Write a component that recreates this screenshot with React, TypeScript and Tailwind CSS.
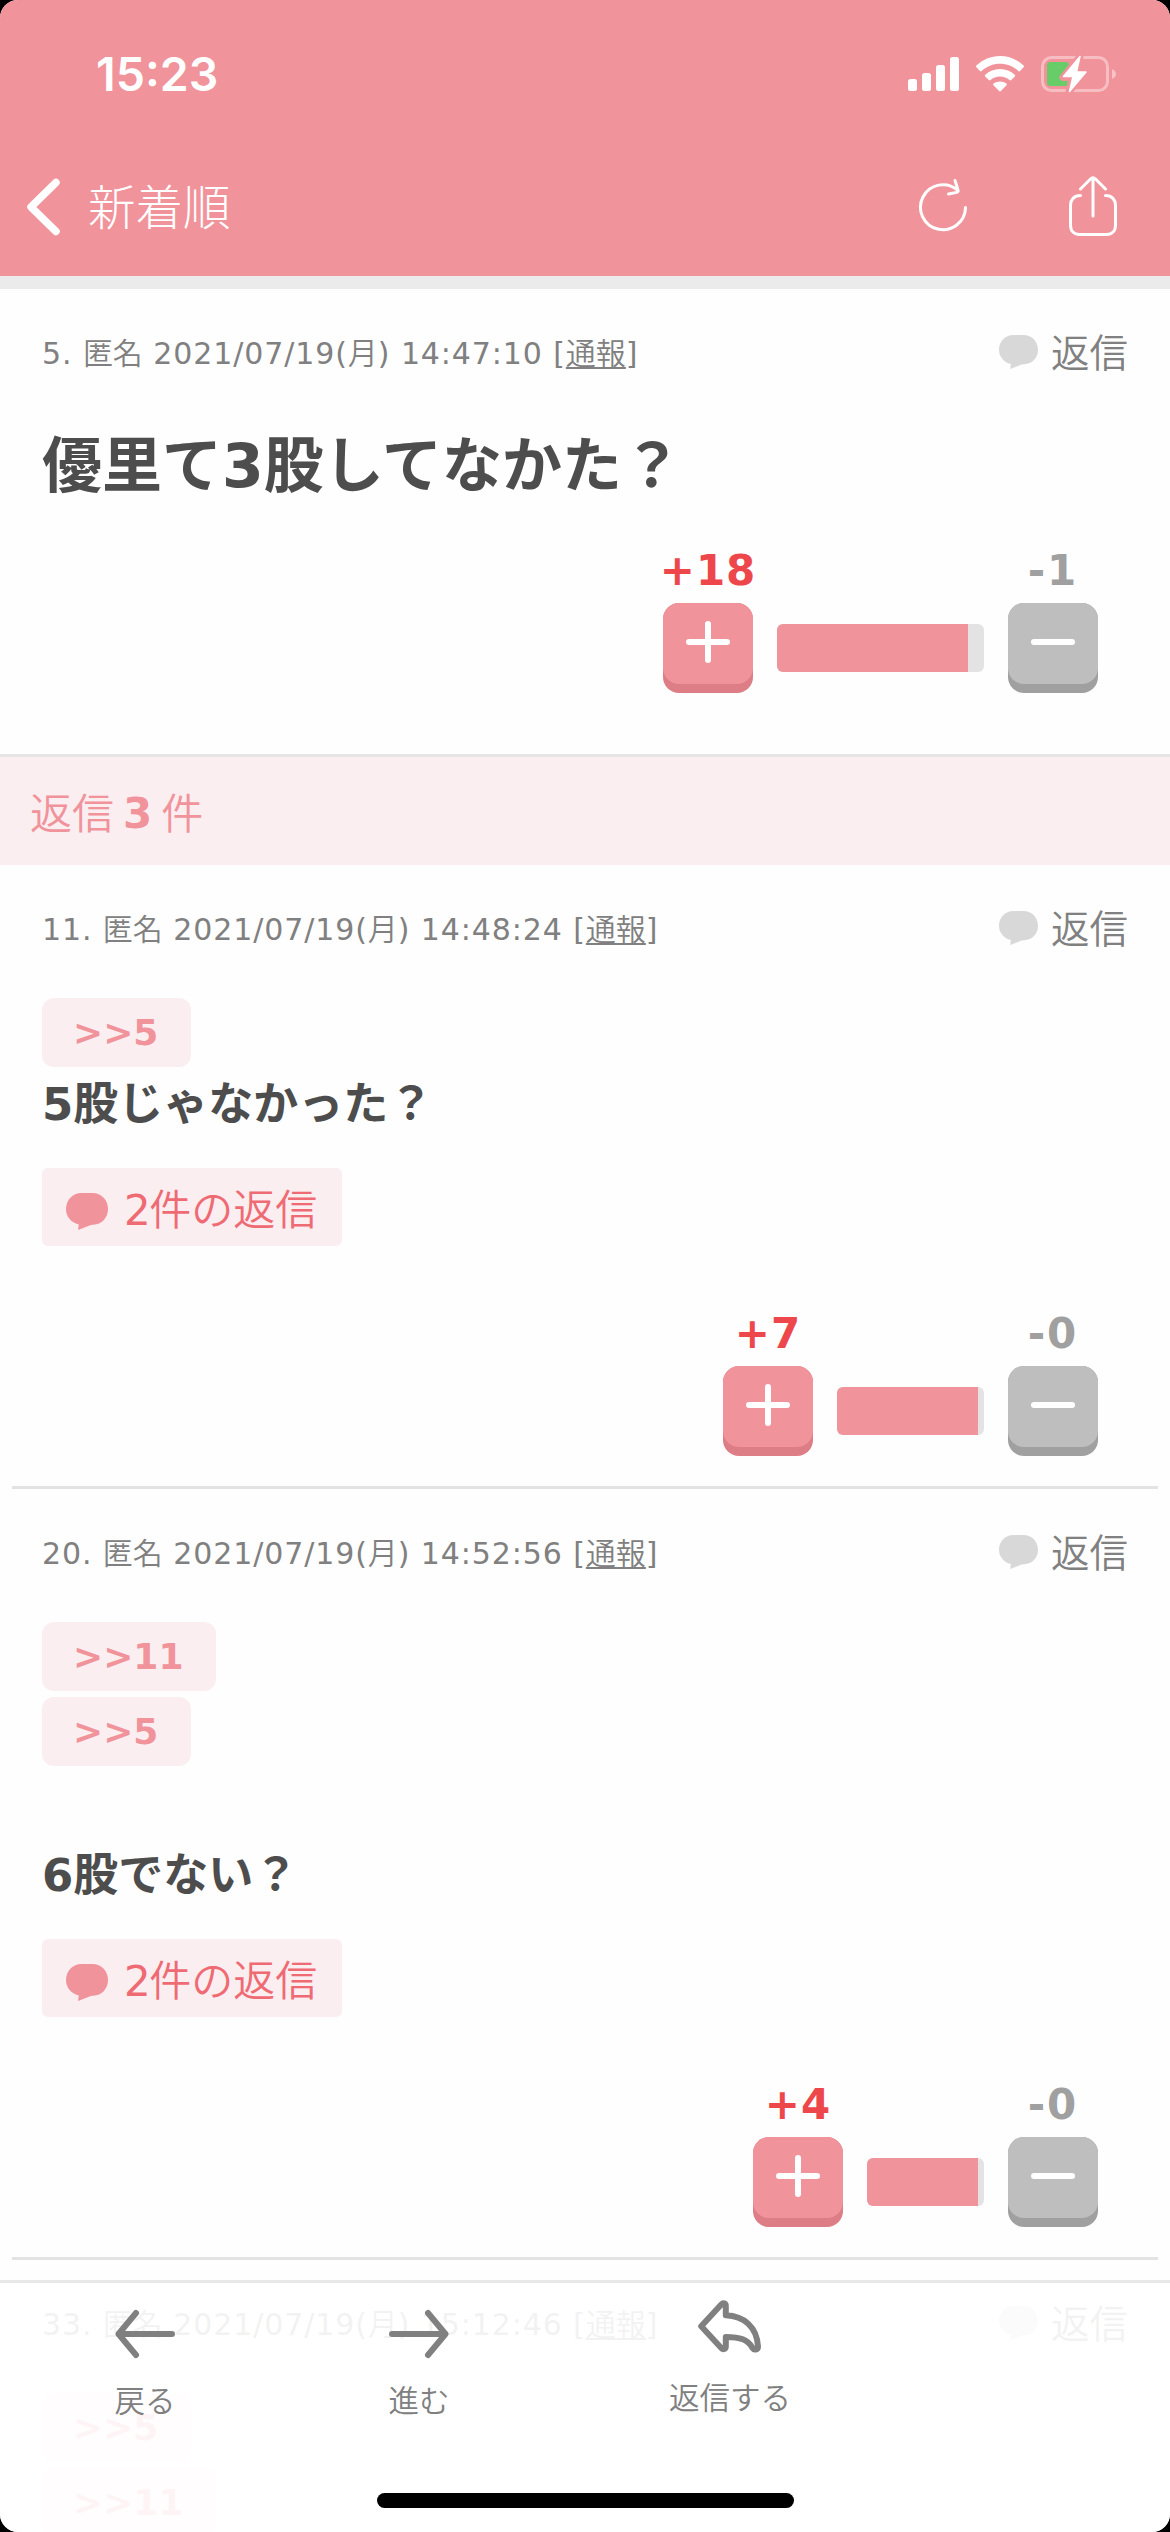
import type { ReactNode } from "react";
import clsx from "clsx";

type Post = {
  id: number;
  time: string;
  quotes: number[];
  body?: string;
  replies?: number;
  plus?: number;
  minus?: number;
  barWidth?: number;
  fillWidth?: number;
};

const posts: Post[] = [
  { id: 11, time: "14:48:24", quotes: [5], body: "5股じゃなかった？", replies: 2, plus: 7, minus: 0, barWidth: 147, fillWidth: 141 },
  { id: 20, time: "14:52:56", quotes: [11, 5], body: "6股でない？", replies: 2, plus: 4, minus: 0, barWidth: 117, fillWidth: 111 },
  { id: 33, time: "15:12:46", quotes: [5, 11] },
];

function Bubble({ className }: { className: string }) {
  return (
    <svg viewBox="0 0 42 37" className={className} fill="currentColor" preserveAspectRatio="none">
      <path d="M15.500 0h11C35.500 0 42 7 42 16s-6.500 15.500-14.500 15.700c-1.800 0-3 .3-4.500 1L12 37l.8-5.500C5 29.500 0 23.500 0 16 0 7 6.500 0 15.500 0z" />
    </svg>
  );
}

function Kanji({ children }: { children: ReactNode }) {
  return <span className="font-['Noto_Sans_CJK_JP',sans-serif] font-[350] tracking-normal">{children}</span>;
}

function StatusBar() {
  return (
    <div className="flex h-[148px] items-center justify-between pl-[96px] pr-[53px]">
      <span className="font-['Inter',sans-serif] text-[46.500px] font-semibold leading-none">15:23</span>
      <div className="flex items-center">
        <svg width="52" height="36" viewBox="0 0 52 36" fill="currentColor">
          <rect x="0" y="23" width="9" height="12" rx="2.500" />
          <rect x="14" y="17" width="9" height="18" rx="2.500" />
          <rect x="28" y="9" width="9" height="26" rx="2.500" />
          <rect x="42" y="1" width="9" height="34" rx="2.500" />
        </svg>
        <svg width="48" height="36" viewBox="0 0 48 36" className="ml-4" fill="currentColor">
          <path d="M24 0c9 0 17.500 3.600 23.600 9.600.5.500.5 1.200 0 1.700l-3.600 3.700c-.5.500-1.200.5-1.700 0C37.500 10.400 31 7.800 24 7.800S10.500 10.400 5.700 15c-.5.500-1.200.5-1.700 0L.4 11.300c-.5-.5-.5-1.200 0-1.700C6.500 3.600 15 0 24 0z" />
          <path d="M24 13c5.600 0 10.800 2.200 14.800 5.700.5.500.5 1.200 0 1.700l-3.600 3.700c-.5.500-1.200.5-1.700 0-2.500-2.200-5.800-3.500-9.500-3.500s-7 1.300-9.500 3.500c-.5.500-1.200.5-1.700 0l-3.600-3.700c-.5-.5-.5-1.200 0-1.700C13.200 15.200 18.400 13 24 13z" />
          <path d="M24 25.400c2.500 0 4.700.8 6.400 2.200.5.400.5 1.100.1 1.600l-5.600 5.900c-.5.500-1.300.5-1.800 0l-5.600-5.900c-.4-.5-.4-1.200.1-1.600 1.700-1.400 3.900-2.200 6.400-2.200z" />
        </svg>
        <svg width="76" height="38" viewBox="0 0 76 38" className="ml-[17px]">
          <rect x="1.500" y="2.500" width="65" height="33" rx="9" fill="none" stroke="white" strokeOpacity=".4" strokeWidth="3" />
          <path d="M71 14v10c2.500-1 4-2.800 4-5s-1.500-4-4-5z" fill="white" fillOpacity=".45" />
          <rect x="6" y="7" width="22" height="24" rx="3.500" fill="#68cc68" />
          <path d="M39 1.500 22 22.500h9.500L28 36.500 46 17h-9.800z" fill="white" stroke="#f0939b" strokeWidth="7" strokeLinejoin="round" />
          <path d="M39 1.500 22.500 21.500h9.500L28.500 36.500 45 17h-9.500z" fill="white" stroke="white" strokeWidth="1.500" strokeLinejoin="round" />
        </svg>
      </div>
    </div>
  );
}

function NavBar() {
  return (
    <div className="flex h-[128px] items-start pl-[26px] pr-[52px] pt-[28px]">
      <svg width="36" height="60" viewBox="0 0 36 60" fill="none" stroke="currentColor" strokeWidth="7.500" strokeLinecap="round" strokeLinejoin="round">
        <path d="M30 6.500 5 31l25 24.500" />
      </svg>
      <span className="ml-[26px] font-['Noto_Sans_CJK_JP',sans-serif] text-[47.500px] font-light leading-[58px]">新着順</span>
      <svg width="50" height="60" viewBox="0 0 50 60" className="ml-auto" fill="none" stroke="currentColor" strokeWidth="3" strokeLinecap="round" strokeLinejoin="round">
        <path d="M47.500 31.500A22.500 22.500 0 1 1 39.500 14" />
        <path d="m37 4.500 3 9.500c.4 1.200-.2 2-1.200 2.400L30.500 18" />
      </svg>
      <svg width="50" height="62" viewBox="0 0 50 62" className="ml-[100px]" fill="none" stroke="currentColor" strokeWidth="3" strokeLinecap="round" strokeLinejoin="round">
        <path d="M12.500 19.500C6 19.500 2.500 24 2.500 29v20c0 6 3.500 9.500 9 9.500h27c5.500 0 9-3.500 9-9.500V29c0-5-3.500-9.500-10-9.500" />
        <path d="M25 40V2.500M12.500 13 22.500 3c1.500-1.500 3.500-1.500 5 0l10 10" />
      </svg>
    </div>
  );
}

function PostHeader({ id, time }: { id: number; time: string }) {
  return (
    <div className="flex h-14 items-center justify-between text-[#808080]">
      <p className="whitespace-nowrap pb-[3px] text-[30px] leading-[53px] tracking-[0.9px]">
        {id}. <Kanji>匿名</Kanji> 2021/07/19(<Kanji>月</Kanji>) {time} [
        <a className="underline decoration-2 underline-offset-[3px]"><Kanji>通報</Kanji></a>]
      </p>
      <button className="flex items-center">
        <Bubble className="mb-1 h-[34px] w-[39px] text-[#d8d8d8]" />
        <span className="ml-[13px] pb-2 font-['Noto_Sans_CJK_JP',sans-serif] text-[38.500px] font-[350] leading-[48px]">返信</span>
      </button>
    </div>
  );
}

function VoteButton({ label, minus }: { label: string; minus?: boolean }) {
  return (
    <div className="flex w-[90px] flex-col items-center gap-2">
      <span className={clsx("whitespace-nowrap text-[42px] font-bold leading-[48px]", minus ? "tracking-[2px] text-[#a0a0a0]" : "tracking-[1px] text-[#ed474b]")}>
        {label}
      </span>
      <button
        className={clsx(
          "flex h-[90px] w-[90px] items-start rounded-2xl",
          minus ? "bg-[#a0a0a0]" : "bg-[#dd7d85]"
        )}
      >
        <span className={clsx("flex h-[81px] w-[90px] items-center justify-center rounded-2xl pb-[3px]", minus ? "bg-[#bebebe]" : "bg-[#f0939b]")}>
          <svg width="44" height="44" viewBox="0 0 44 44" stroke="white" strokeWidth="6" strokeLinecap="round">
            <path d={minus ? "M3 22h38" : "M3 22h38M22 4v36"} />
          </svg>
        </span>
      </button>
    </div>
  );
}

function Votes({ plus, minus, barWidth, fillWidth }: { plus: number; minus: number; barWidth: number; fillWidth: number }) {
  return (
    <div className="flex items-end justify-end gap-6 pr-[30px]">
      <VoteButton label={`+${plus}`} />
      <div className="mb-[21px] h-12 overflow-hidden rounded-md bg-[#e3e3e3]" style={{ width: barWidth }}>
        <div className="h-full bg-[#f0939b]" style={{ width: fillWidth }} />
      </div>
      <VoteButton label={`-${minus}`} minus />
    </div>
  );
}

function ReplyPost({ post }: { post: Post }) {
  return (
    <article className="pt-[37px]">
      <div className="px-[42px]">
        <PostHeader id={post.id} time={post.time} />
        <div className="mt-10 flex flex-col items-start gap-1.5">
          {post.quotes.map((quote) => (
            <a key={quote} className="h-[69px] rounded-xl bg-[#fbeef1] pl-[31px] pr-[33px] text-[36px] font-bold leading-[69px] text-[#f0939b]">
              &gt;&gt;{quote}
            </a>
          ))}
        </div>
        {post.body && (
          <>
            <p className={clsx("text-[45px] font-bold leading-[54px] text-[#4d4d4d]", post.quotes.length > 1 ? "mt-[83px]" : "mt-[11px]")}>
              {post.body}
            </p>
            <button className="mt-[36px] flex h-[78px] w-[300px] items-center rounded-md bg-[#fbeef1] pl-6 text-[42px] leading-[78px] text-[#ef6b74]">
              <Bubble className="mt-2 h-[37px] w-[42px] text-[#f0939b]" />
              <span className="ml-4 mt-1 whitespace-nowrap tracking-[-1.500px]">{post.replies}<Kanji>件の返信</Kanji></span>
            </button>
            <div className="mt-16">
              <Votes plus={post.plus!} minus={post.minus!} barWidth={post.barWidth!} fillWidth={post.fillWidth!} />
            </div>
          </>
        )}
      </div>
      {post.body && <div className="mx-3 mt-[30px] h-[3px] bg-[#e3e3e3]" />}
    </article>
  );
}

function Toolbar() {
  return (
    <footer className="absolute inset-x-0 bottom-0 h-[252px] border-t-[3px] border-[#e8e8e8] bg-white/90 text-[#808080]">
      <div className="flex items-start font-['Noto_Sans_CJK_JP',sans-serif] text-[30.500px] font-[350] leading-10">
        <button className="ml-[85px] flex w-[120px] flex-col items-center pt-[26px]">
          <svg width="60" height="50" viewBox="0 0 60 50" fill="none" stroke="currentColor" strokeWidth="6" strokeLinecap="round" strokeLinejoin="round">
            <path d="M57 25H4M21 4 3.500 25 21 46" />
          </svg>
          <span className="mt-[20px]">戻る</span>
        </button>
        <button className="ml-[154px] flex w-[120px] flex-col items-center pt-[26px]">
          <svg width="60" height="50" viewBox="0 0 60 50" fill="none" stroke="currentColor" strokeWidth="6" strokeLinecap="round" strokeLinejoin="round">
            <path d="M3 25h53M39 4l17.500 21L39 46" />
          </svg>
          <span className="mt-[20px]">進む</span>
        </button>
        <button className="ml-[190px] flex w-[122px] flex-col items-center pt-[17px]">
          <svg width="64" height="54" viewBox="0 0 64 54" fill="none" stroke="currentColor" strokeWidth="6" strokeLinejoin="round">
            <path d="M3.200 26.300 23.500 4.200c1.600-1.800 4.300-.8 4.300 1.500V15.300C46 16 59 27 60 46.500c0 3.500-4 4-5.500 1.500C50 39.500 42 37 27.800 37v9.500c0 2.500-2.600 3.500-4.300 1.700z" />
          </svg>
          <span className="mt-[22px] whitespace-nowrap">返信する</span>
        </button>
      </div>
      <div className="absolute bottom-6 left-[377px] h-[15px] w-[417px] rounded-full bg-black" />
    </footer>
  );
}

export default function App() {
  return (
    <div className="h-[2532px] w-[1170px] bg-black">
      <div className="relative h-full overflow-hidden rounded-[18px] bg-[#fefefe] font-['DejaVu_Sans','Noto_Sans_CJK_JP',sans-serif]">
        <header className="h-[289px] border-b-[13px] border-[#ebebeb] bg-[#f0939b] text-white">
          <StatusBar />
          <NavBar />
        </header>

        <article className="h-[468px] border-b-[3px] border-[#e5e5e5] px-[42px] pt-[37px]">
          <PostHeader id={5} time="14:47:10" />
          <h1 className="mt-[48px] text-[60px] font-bold leading-[72px] text-[#4d4d4d]">優里て3股してなかた？</h1>
          <div className="mt-[45px]">
            <Votes plus={18} minus={1} barWidth={207} fillWidth={191} />
          </div>
        </article>

        <h2 className="flex h-[108px] gap-[9px] bg-[#fbeef1] pl-[30px] text-[42px] leading-[108px] text-[#f0939b]">
          <Kanji>返信</Kanji>
          <b className="pt-[3px]">3</b>
          <Kanji>件</Kanji>
        </h2>

        {posts.map((post) => (
          <ReplyPost key={post.id} post={post} />
        ))}

        <Toolbar />
      </div>
    </div>
  );
}
